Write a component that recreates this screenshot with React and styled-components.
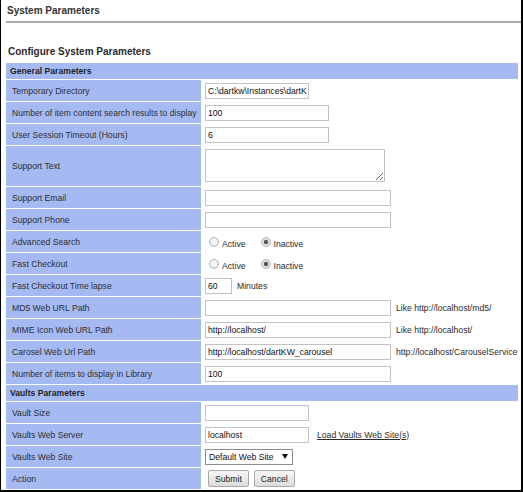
import React from 'react'
import styled, { createGlobalStyle } from 'styled-components'

const GlobalStyle = createGlobalStyle`
  html, body {
    margin: 0;
    padding: 0;
    background: #ffffff;
  }
  body {
    font-family: "Liberation Sans", Arial, sans-serif;
    color: #2b2b2b;
  }
`

const Frame = styled.div`
  box-sizing: border-box;
  width: 523px;
  height: 492px;
  border-left: 1px solid #000;
  border-right: 2px solid #000;
  border-bottom: 2px solid #000;
  background: #fff;
  overflow: hidden;
`

const PageTitle = styled.div`
  font-size: 10px;
  font-weight: bold;
  line-height: 12px;
  color: #333;
  padding: 5px 0 0 6px;
  height: 16px;
`

const Rule = styled.div`
  margin-left: 5px;
  border-top: 2px solid #a9a9a9;
`

const SectionTitle = styled.div`
  font-size: 10px;
  font-weight: bold;
  line-height: 12px;
  color: #2b2b2b;
  padding: 23px 0 0 7px;
  height: 17px;
`

const Grid = styled.div`
  display: grid;
  grid-template-columns: 195px 1fr;
  column-gap: 2px;
  row-gap: 1px;
  width: 512px;
  margin-left: 5px;
  font-size: 8.65px;
`

const Header = styled.div`
  grid-column: 1 / -1;
  height: 16px;
  line-height: 16px;
  padding-left: 4px;
  background: #a5baf3;
  font-weight: bold;
  color: #222;
`

const Label = styled.div`
  display: flex;
  align-items: center;
  min-height: ${p => (p.$tall ? 40 : 21)}px;
  padding-left: 6px;
  background: #a5baf3;
  color: #2f2f2f;
`

const Value = styled.div`
  display: flex;
  align-items: center;
  padding-left: 2px;
  gap: 5px;
  color: #2b2b2b;
  white-space: nowrap;
`

const TextInput = styled.input`
  box-sizing: border-box;
  width: ${p => p.$w}px;
  height: 16px;
  margin: 0;
  padding: 0 1px 0 2px;
  border: 1px solid #c2c2c2;
  font-family: inherit;
  font-size: 8.65px;
  color: #111;
  outline: none;
`

const TextArea = styled.textarea`
  box-sizing: border-box;
  width: 180px;
  height: 33px;
  margin: -1px 0 0;
  padding: 2px;
  border: 1px solid #c2c2c2;
  font-family: inherit;
  font-size: 8.65px;
  outline: none;
`

const RadioGroup = styled.div`
  display: flex;
  align-items: center;
  padding-top: 2px;
`

const RadioLabel = styled.label`
  display: flex;
  align-items: center;
  margin-right: ${p => (p.$last ? 0 : 11)}px;
  color: #2b2b2b;
  padding-top: 2px;
`

const Radio = styled.input.attrs({ type: 'radio' })`
  appearance: none;
  box-sizing: border-box;
  width: 10px;
  height: 10px;
  margin: -3px 3px 0 4px;
  border: 1px solid #b5b5b5;
  border-radius: 50%;
  background: radial-gradient(circle at 50% 40%, #fdfdfd 0%, #e2e2e2 100%);

  &:checked {
    background: radial-gradient(circle, #555 0 1.8px, #d8d8d8 2.4px, #f2f2f2 100%);
  }
`

const Hint = styled.span`
  color: #2b2b2b;
`

const LinkText = styled.a`
  margin-left: 3px;
  color: #2b2b2b;
  text-decoration: underline;
  cursor: pointer;
`

const SelectWrap = styled.div`
  position: relative;
  display: inline-flex;
`

const Select = styled.select`
  appearance: none;
  box-sizing: border-box;
  width: 88px;
  height: 16px;
  margin: 0;
  padding: 0 14px 0 3px;
  border: 1px solid #8c8c8c;
  background: #fff;
  font-family: inherit;
  font-size: 8.65px;
  color: #111;
  outline: none;
`

const Arrow = styled.svg`
  position: absolute;
  right: 5px;
  top: 5px;
  pointer-events: none;
`

const Button = styled.button`
  box-sizing: border-box;
  height: 17px;
  margin: 0 3px 0 ${p => (p.$first ? 3 : 2)}px;
  padding: 0 6px;
  border: 1px solid #a8a8a8;
  border-radius: 2px;
  background: linear-gradient(#f8f8f8, #dcdcdc);
  font-family: inherit;
  font-size: 8.65px;
  color: #222;
`

const Row = ({ label, tall, children }) => (
  <>
    <Label $tall={tall}>{label}</Label>
    <Value>{children}</Value>
  </>
)

const RadioPair = ({ name }) => (
  <RadioGroup>
    <RadioLabel>
      <Radio name={name} />
      Active
    </RadioLabel>
    <RadioLabel $last>
      <Radio name={name} defaultChecked />
      Inactive
    </RadioLabel>
  </RadioGroup>
)

export default function App() {
  return (
    <>
      <GlobalStyle />
      <Frame>
        <PageTitle>System Parameters</PageTitle>
        <Rule />
        <SectionTitle>Configure System Parameters</SectionTitle>
        <Grid>
          <Header>General Parameters</Header>
          <Row label="Temporary Directory">
            <TextInput $w={104} defaultValue={'C:\\dartkw\\Instances\\dartK'} />
          </Row>
          <Row label="Number of item content search results to display">
            <TextInput $w={124} defaultValue="100" />
          </Row>
          <Row label="User Session Timeout (Hours)">
            <TextInput $w={124} defaultValue="6" />
          </Row>
          <Row label="Support Text" tall>
            <TextArea />
          </Row>
          <Row label="Support Email">
            <TextInput $w={186} />
          </Row>
          <Row label="Support Phone">
            <TextInput $w={186} />
          </Row>
          <Row label="Advanced Search">
            <RadioPair name="adv" />
          </Row>
          <Row label="Fast Checkout">
            <RadioPair name="fast" />
          </Row>
          <Row label="Fast Checkout Time lapse">
            <TextInput $w={27} defaultValue="60" />
            <Hint>Minutes</Hint>
          </Row>
          <Row label="MD5 Web URL Path">
            <TextInput $w={186} />
            <Hint>Like http://localhost/md5/</Hint>
          </Row>
          <Row label="MIME Icon Web URL Path">
            <TextInput $w={186} defaultValue="http://localhost/" />
            <Hint>Like http://localhost/</Hint>
          </Row>
          <Row label="Carosel Web Url Path">
            <TextInput $w={186} defaultValue="http://localhost/dartKW_carousel" />
            <Hint>http://localhost/CarouselService</Hint>
          </Row>
          <Row label="Number of items to display in Library">
            <TextInput $w={186} defaultValue="100" />
          </Row>

          <Header>Vaults Parameters</Header>
          <Row label="Vault Size">
            <TextInput $w={104} />
          </Row>
          <Row label="Vaults Web Server">
            <TextInput $w={104} defaultValue="localhost" />
            <LinkText>Load Vaults Web Site(s)</LinkText>
          </Row>
          <Row label="Vaults Web Site">
            <SelectWrap>
              <Select defaultValue="default">
                <option value="default">Default Web Site</option>
              </Select>
              <Arrow width="6" height="5" viewBox="0 0 6 5">
                <path d="M0 0 L6 0 L3 5 Z" fill="#111" />
              </Arrow>
            </SelectWrap>
          </Row>
          <Row label="Action">
            <div>
              <Button $first>Submit</Button>
              <Button>Cancel</Button>
            </div>
          </Row>
        </Grid>
      </Frame>
    </>
  )
}
